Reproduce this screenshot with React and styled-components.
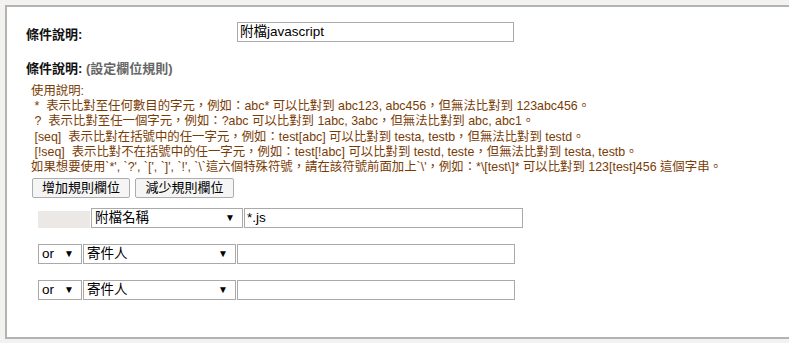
import React from "react";
import styled, { createGlobalStyle } from "styled-components";

const GlobalStyle = createGlobalStyle`
  html, body {
    margin: 0;
    padding: 0;
    background: #f3f2f0;
    overflow: hidden;
  }
  body {
    font-family: "Liberation Sans", "Noto Sans CJK TC", Arial, sans-serif;
  }
`;

const Page = styled.div`
  width: 789px;
  height: 343px;
  padding: 5px 0 0 5px;
  box-sizing: border-box;
`;

const Panel = styled.div`
  height: 334px;
  box-sizing: border-box;
  background: #fff;
  border: 2px solid #b3b3b3;
  border-right: none;
  display: flex;
  flex-direction: column;
`;

const FieldRow = styled.div`
  display: grid;
  grid-template-columns: 230px 277px;
  align-items: center;
  margin-top: 14px;
`;

const Label = styled.div`
  padding-left: 19px;
  font-size: 13px;
  font-weight: bold;
  color: #111;
  line-height: 16px;
  padding-top: 6px;
`;

const Hint = styled.span`
  color: #666;
`;

const SectionTitle = styled(Label)`
  margin-top: 18px;
  padding-top: 0;
`;

const TextBox = styled.div`
  height: 20px;
  box-sizing: border-box;
  width: ${(p) => p.$width}px;
  border: 1px solid #a9a9a9;
  background: #fff;
  font-size: 13.5px;
  line-height: 18px;
  padding-left: 2px;
  color: #000;
  white-space: nowrap;
  overflow: hidden;
`;

const Instructions = styled.div`
  margin-top: 7px;
  padding-left: 24px;
  font-size: 12.4px;
  line-height: 15.2px;
  color: #7a3c05;
  white-space: pre;
`;

const ButtonBar = styled.div`
  display: flex;
  gap: 5px;
  padding-left: 25px;
  margin-top: 3px;
`;

const Button = styled.button`
  height: 20px;
  width: ${(p) => p.$width}px;
  box-sizing: border-box;
  border: 1px solid #adadad;
  border-radius: 2px;
  background: #f5f5f5;
  font-family: inherit;
  font-size: 13px;
  line-height: 16px;
  padding: 0;
  color: #000;
`;

const Rules = styled.div`
  display: flex;
  flex-direction: column;
  gap: 16px;
  padding-left: 31px;
  margin-top: 10px;
`;

const RuleRow = styled.div`
  display: flex;
  align-items: flex-end;
  gap: 1px;
`;

const Blank = styled.div`
  width: 52px;
  height: 17px;
  background: #ece8e5;
`;

const Select = styled.div`
  height: 20px;
  width: ${(p) => p.$width}px;
  box-sizing: border-box;
  border: 1px solid #a9a9a9;
  background: #fff;
  font-size: 13.5px;
  line-height: 18px;
  padding-left: 3px;
  color: #000;
  display: flex;
  align-items: center;
  justify-content: space-between;
`;

const Arrow = styled.span`
  font-size: 10px;
  margin-right: 7px;
  color: #000;
`;

const lines = [
  "使用說明:",
  " *  表示比對至任何數目的字元，例如：abc* 可以比對到 abc123, abc456，但無法比對到 123abc456。",
  " ?  表示比對至任一個字元，例如：?abc 可以比對到 1abc, 3abc，但無法比對到 abc, abc1。",
  " [seq]  表示比對在括號中的任一字元，例如：test[abc] 可以比對到 testa, testb，但無法比對到 testd。",
  " [!seq]  表示比對不在括號中的任一字元，例如：test[!abc] 可以比對到 testd, teste，但無法比對到 testa, testb。",
  "如果想要使用`*', `?', `[', `]', `!', `\\`這六個特殊符號，請在該符號前面加上`\\'，例如：*\\[test\\]* 可以比對到 123[test]456 這個字串。",
];

const rows = [{ first: true, field: "附檔名稱", value: "*.js" }, { field: "寄件人" }, { field: "寄件人" }];

export default function App() {
  return (
    <Page>
      <GlobalStyle />
      <Panel>
        <FieldRow>
          <Label>條件說明:</Label>
          <TextBox $width={277}>附檔javascript</TextBox>
        </FieldRow>
        <SectionTitle>
          條件說明: <Hint>(設定欄位規則)</Hint>
        </SectionTitle>
        <Instructions>
          {lines.map((l, i) => (
            <div key={i}>{l}</div>
          ))}
        </Instructions>
        <ButtonBar>
          <Button $width={98}>增加規則欄位</Button>
          <Button $width={99}>減少規則欄位</Button>
        </ButtonBar>
        <Rules>
          {rows.map((r, i) => (
            <RuleRow key={i}>
              {r.first ? (
                <Blank />
              ) : (
                <Select $width={44}>
                  or<Arrow>▼</Arrow>
                </Select>
              )}
              <Select $width={r.first ? 152 : 153}>
                {r.field}
                <Arrow>▼</Arrow>
              </Select>
              <TextBox $width={r.first ? 279 : 278}>{r.value || ""}</TextBox>
            </RuleRow>
          ))}
        </Rules>
      </Panel>
    </Page>
  );
}
